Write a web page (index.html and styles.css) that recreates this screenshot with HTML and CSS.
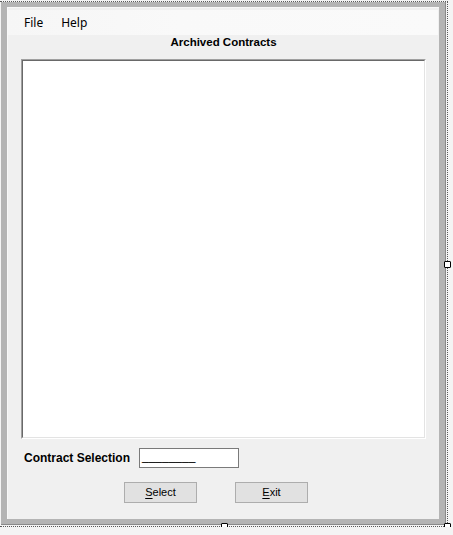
FILE: index.html
```html
<!DOCTYPE html>
<html>
<head>
<meta charset="utf-8">
<title>Archived Contracts</title>
<link rel="stylesheet" href="styles.css">
</head>
<body>
<div class="designer">
  <div class="form">
    <div class="client">
      <div class="menubar">
        <span class="menu-item">File</span>
        <span class="menu-item">Help</span>
      </div>
      <div class="title">Archived Contracts</div>
      <div class="list"><div class="list-inner"></div></div>
      <div class="field-row">
        <span class="field-label">Contract Selection</span>
        <div class="textbox">________</div>
      </div>
      <div class="button-row">
        <div class="btn"><u>S</u>elect</div>
        <div class="btn btn-exit"><u>E</u>xit</div>
      </div>
    </div>
  </div>
  <span class="handle handle-right"></span>
  <span class="handle handle-bottom"></span>
  <span class="handle handle-corner"></span>
</div>
</body>
</html>
```
FILE: styles.css
```css
html, body {
  margin: 0;
  padding: 0;
  background: #f4f4f4;
}

.designer {
  position: relative;
  width: 445px;
  margin-top: 1px;
  padding: 0 1px 1px 1px;
  border-top: 1px dotted #5a5a5a;
  border-right: 1px dotted #5a5a5a;
  border-bottom: 1px dotted #5a5a5a;
}

.form {
  background: #b4b4b4;
  padding: 5px 6px 5px 6px;
  border-right: 1px solid #8a8a8a;
  border-bottom: 1px solid #8a8a8a;
  width: 432px;
}

.client {
  display: flex;
  flex-direction: column;
  background: #f0f0f0;
  border-top: 1px solid #f8f8f8;
  border-left: 1px solid #f8f8f8;
  height: 511px;
  font-family: "Liberation Sans", Arial, sans-serif;
  color: #000;
}

.menubar {
  display: flex;
  align-items: center;
  gap: 18px;
  height: 25px;
  margin: 2px 1px 0 0;
  padding-left: 16px;
  background: linear-gradient(to right, #f6f6f6, #f9f9f9 40%, #fafafa);
  font-family: "Noto Sans", "Open Sans", sans-serif;
  font-size: 12px;
  line-height: 16px;
}

.title {
  text-align: center;
  font-weight: bold;
  font-size: 11.5px;
  line-height: 13px;
  margin-top: 1px;
  margin-bottom: 10px;
}

.list {
  margin-left: 13px;
  width: 403px;
  height: 378px;
  display: flex;
  border: 1px solid;
  border-color: #a0a0a0 #ffffff #ffffff #a0a0a0;
}

.list-inner {
  flex: 1;
  background: #fff;
  border: 1px solid;
  border-color: #696969 #e3e3e3 #e3e3e3 #696969;
}

.field-row {
  display: flex;
  align-items: center;
  margin-top: 9px;
  height: 20px;
  padding-left: 16px;
}

.field-label {
  width: 115px;
  font-weight: bold;
  font-size: 12px;
  line-height: 14px;
}

.textbox {
  box-sizing: border-box;
  width: 100px;
  height: 20px;
  background: #fff;
  border: 1px solid #7a7a7a;
  font-size: 12px;
  line-height: 14px;
  padding: 0 0 0 2px;
}

.button-row {
  display: flex;
  margin-top: 14px;
  padding-left: 116px;
  gap: 38px;
}

.btn {
  box-sizing: border-box;
  width: 73px;
  height: 21px;
  background: #e1e1e1;
  border: 1px solid #adadad;
  font-size: 11px;
  line-height: 19px;
  text-align: center;
}

.btn u {
  text-decoration-thickness: 1px;
  text-underline-offset: 2px;
}

.handle {
  position: absolute;
  box-sizing: border-box;
  width: 7px;
  height: 7px;
  background: #fff;
  border: 1px solid #000;
  border-radius: 1px;
}

.handle-right {
  right: -4px;
  top: calc(50% - 3px);
}

.handle-bottom {
  bottom: -4px;
  left: calc(50% - 3px);
}

.handle-corner {
  right: -4px;
  bottom: -4px;
}
```
